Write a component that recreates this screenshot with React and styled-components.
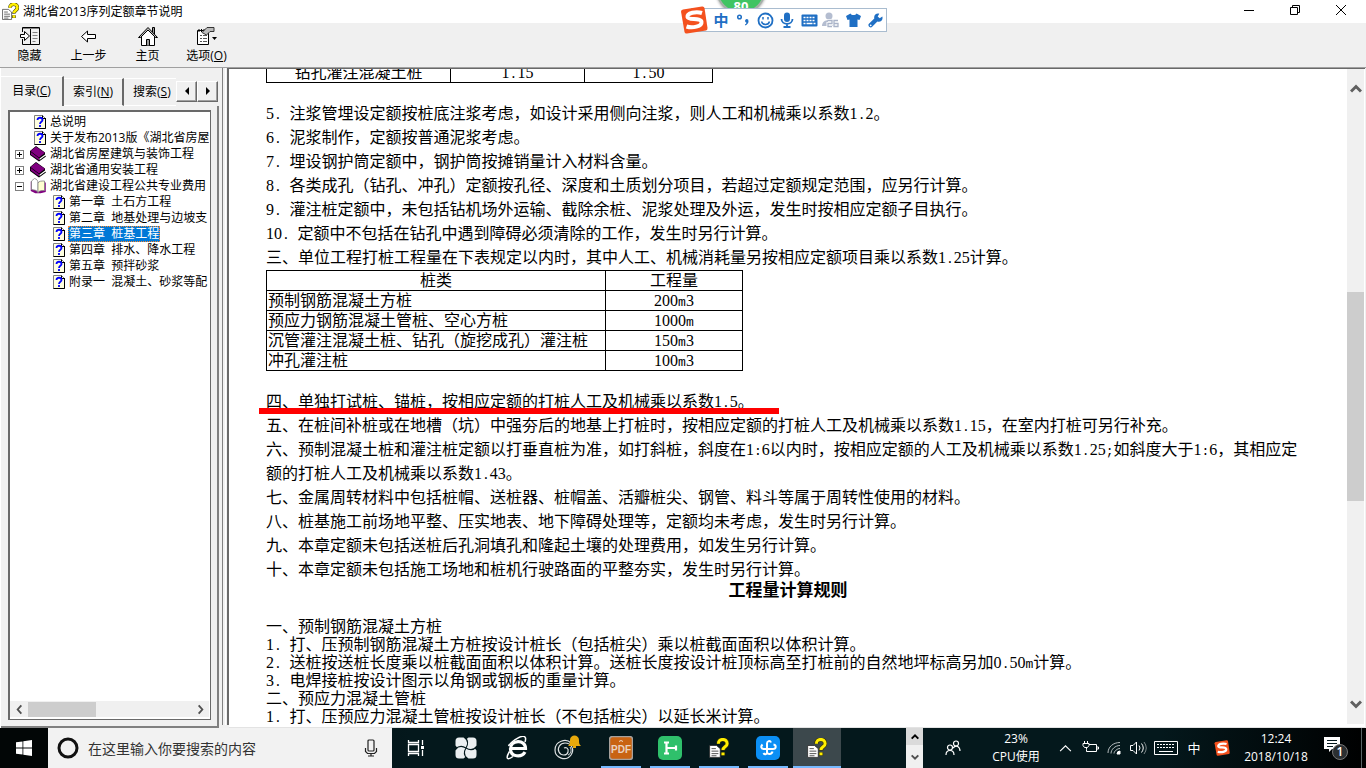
import React from 'react';
import styled, { createGlobalStyle } from 'styled-components';

const UI_FONT = '"Open Sans", "Noto Sans CJK SC", sans-serif';
const DOC_FONT = '"Liberation Serif", "Noto Sans CJK SC", serif';

const GlobalStyle = createGlobalStyle`
    * {
        box-sizing: border-box;
    }

    body {
        margin: 0;
        font-family: ${UI_FONT};
        font-size: 12px;
        color: #000;
        overflow: hidden;
        text-spacing-trim: space-all;
    }

    button {
        font: inherit;
        color: inherit;
        border: 0;
        padding: 0;
        background: none;
    }
`;

/* ---------- data ---------- */

const tree = [
    { type: 'page', label: '总说明' },
    { type: 'page', label: '关于发布2013版《湖北省房屋' },
    { type: 'book', label: '湖北省房屋建筑与装饰工程', toggle: '+' },
    { type: 'book', label: '湖北省通用安装工程', toggle: '+' },
    { type: 'open', label: '湖北省建设工程公共专业费用', toggle: '-' },
    { type: 'page', label: '第一章  土石方工程', child: true },
    { type: 'page', label: '第二章  地基处理与边坡支', child: true },
    { type: 'page', label: '第三章  桩基工程', child: true, selected: true },
    { type: 'page', label: '第四章  排水、降水工程', child: true },
    { type: 'page', label: '第五章  预拌砂浆', child: true },
    { type: 'page', label: '附录一  混凝土、砂浆等配', child: true },
];

const notes = [
    '5. 注浆管埋设定额按桩底注浆考虑，如设计采用侧向注浆，则人工和机械乘以系数1.2。',
    '6. 泥浆制作，定额按普通泥浆考虑。',
    '7. 埋设钢护筒定额中，钢护筒按摊销量计入材料含量。',
    '8. 各类成孔（钻孔、冲孔）定额按孔径、深度和土质划分项目，若超过定额规定范围，应另行计算。',
    '9. 灌注桩定额中，未包括钻机场外运输、截除余桩、泥浆处理及外运，发生时按相应定额子目执行。',
    '10. 定额中不包括在钻孔中遇到障碍必须清除的工作，发生时另行计算。',
    '三、单位工程打桩工程量在下表规定以内时，其中人工、机械消耗量另按相应定额项目乘以系数1.25计算。',
];

const quantities = [
    ['预制钢筋混凝土方桩', '200m3'],
    ['预应力钢筋混凝土管桩、空心方桩', '1000m'],
    ['沉管灌注混凝土桩、钻孔（旋挖成孔）灌注桩', '150m3'],
    ['冲孔灌注桩', '100m3'],
];

const clauses = [
    '五、在桩间补桩或在地槽（坑）中强夯后的地基上打桩时，按相应定额的打桩人工及机械乘以系数1.15，在室内打桩可另行补充。',
    '六、预制混凝土桩和灌注桩定额以打垂直桩为准，如打斜桩，斜度在1:6以内时，按相应定额的人工及机械乘以系数1.25;如斜度大于1:6，其相应定额的打桩人工及机械乘以系数1.43。',
    '七、金属周转材料中包括桩帽、送桩器、桩帽盖、活瓣桩尖、钢管、料斗等属于周转性使用的材料。',
    '八、桩基施工前场地平整、压实地表、地下障碍处理等，定额均未考虑，发生时另行计算。',
    '九、本章定额未包括送桩后孔洞填孔和隆起土壤的处理费用，如发生另行计算。',
    '十、本章定额未包括施工场地和桩机行驶路面的平整夯实，发生时另行计算。',
];

const rules = [
    '一、预制钢筋混凝土方桩',
    '1. 打、压预制钢筋混凝土方桩按设计桩长（包括桩尖）乘以桩截面面积以体积计算。',
    '2. 送桩按送桩长度乘以桩截面面积以体积计算。送桩长度按设计桩顶标高至打桩前的自然地坪标高另加0.50m计算。',
    '3. 电焊接桩按设计图示以角钢或钢板的重量计算。',
    '二、预应力混凝土管桩',
    '1. 打、压预应力混凝土管桩按设计桩长（不包括桩尖）以延长米计算。',
];

/* ---------- icons ---------- */

const HelpIcon = ({ size = 16 }) => (
    <svg width={size} height={size} viewBox="0 0 16 16">
        <path d="M0.500 6h5.500l3 2.500V15.500H0.500z" fill="#fff" stroke="#222" strokeWidth="0.600" />
        <path d="M2 8.500h3.500M2 10.500h5.500M2 12.500h5.500M2 14.200h4" stroke="#555" strokeWidth="0.800" />
        <path d="M7.500 4.500c0-4.500 7-4.500 7 0 0 2.500-3.300 2.500-3.300 5.500M11.200 11.500v2.500" fill="none" stroke="#3a3600" strokeWidth="3.400" />
        <path d="M7.500 4.500c0-4.500 7-4.500 7 0 0 2.500-3.300 2.500-3.300 5M11.200 11.500v2.300" fill="none" stroke="#ffee00" strokeWidth="2.400" />
    </svg>
);

const PageIcon = () => (
    <svg width="12" height="14" viewBox="0 0 12 14">
        <path d="M0.500 0.500h8l3 3v10h-11z" fill="#ffffe0" stroke="#808080" />
        <path d="M11.500 3v10.500H0.500M8.500 0.500v3h3" fill="none" stroke="#000" />
        <path d="M3.500 5c0-3 5-3 5 0 0 1.800-2.500 1.800-2.500 4M6 10v2" fill="none" stroke="#0000ff" strokeWidth="1.800" />
    </svg>
);

const BookIcon = () => (
    <svg width="16" height="16" viewBox="0 0 16 16">
        <path d="M0 5v4l9 6.500 7-5-1-1V6.500L6 0z" fill="#000" />
        <path d="M0.500 5L6 0.800l9 6-6 4.700z" fill="#800080" />
        <path d="M0.800 6l8.200 6.200v2L0.800 8.500z" fill="#800080" />
        <path d="M9.500 12.500l5.500-4v1.500l-5.500 4z" fill="#fff" />
    </svg>
);

const OpenBookIcon = () => (
    <svg width="16" height="16" viewBox="0 0 16 16">
        <path d="M1.500 3.500v9l4 2h5l4.500-1v-9" fill="#800080" stroke="#800080" strokeWidth="1.500" />
        <path d="M1.500 3l3-2.500C7 1 8 3 8 5v9.500c-1-2-3-2.500-4-2.500l-2.500-.5z" fill="#fff" stroke="#808080" strokeWidth="0.800" />
        <path d="M8 5c1-2 3-2 6.500-2v9.500c-3 0-5 0-6.500 2z" fill="#ffffd0" stroke="#808080" strokeWidth="0.800" />
    </svg>
);

const HideIcon = () => (
    <svg width="20" height="20" viewBox="0 0 20 20" fill="none" stroke="#000">
        <path d="M2.500 6V1.500h17v17h-17V13M10.500 1.500v17" />
        <path d="M3 2.500h16" stroke="#808080" />
        <path d="M12.500 6.500h5M12.500 9.500h5M12.500 12.500h5M12.500 15.500h3" stroke="#808080" />
        <path d="M0.500 8.500h4v-3l5 4.500-5 4.500v-3h-4z" fill="#fff" />
    </svg>
);

const BackIcon = () => (
    <svg width="20" height="20" viewBox="0 0 20 20">
        <path d="M2.500 10.500l6-5.500v3.500h8v4h-8V16z" fill="#fff" stroke="#000" />
    </svg>
);

const HomeIcon = () => (
    <svg width="20" height="20" viewBox="0 0 20 20" stroke="#000">
        <path d="M14.500 6V1.500h2V8" fill="#999" />
        <path d="M3.500 10v9.500h13V10L10 3z" fill="#fff" />
        <path d="M0.500 11.500L10 1.500l9.500 10h-2L10 4l-7.500 7.500z" fill="#bbb" />
        <path d="M8.500 19.500v-6h3v6" fill="#999" />
    </svg>
);

const OptionsIcon = () => (
    <svg width="22" height="20" viewBox="0 0 22 20">
        <path d="M1.500 4.500h11v14h-11z" fill="#fff" stroke="#000" />
        <path d="M3 3v3M5.500 3v3M8 3v3" stroke="#000" />
        <path d="M4 9.500h2M7 9.500h4M4 12.500h2M7 12.500h4M4 15.500h2M7 15.500h4" stroke="#555" />
        <path d="M6 6.500L11 1.500h7v4h-4L10.500 9z" fill="#bbb" stroke="#333" />
        <path d="M16 11h5l-2.500 3z" fill="#000" />
    </svg>
);

const SogouIcon = ({ size = 28 }) => (
    <svg width={size} height={size} viewBox="0 0 28 28">
        <path d="M1 5.500Q1 4 3 3.500L22 .500q2-.3 2.500 1.500l3 20q.2 2-1.500 2.500L7 27.500q-2 .3-2.500-1.500z" fill="#f4511e" />
        <path d="M22 7c-6-2-15 0-14.500 4 .5 3.500 13.500.5 14 5s-9 6.500-15 4.500" fill="none" stroke="#fff" strokeWidth="4" />
    </svg>
);

const Chevron = ({ d, size = 12, color = '#505050', width = 2 }) => (
    <svg width={size} height={size} viewBox="0 0 12 12">
        <path d={d} fill="none" stroke={color} strokeWidth={width} />
    </svg>
);

const UP = 'M1 8.500L6 3.500l5 5';
const DOWN = 'M1 3.500l5 5 5-5';
const LEFT = 'M8 1.500L4 6l4 4.500';
const RIGHT = 'M4 1.500L8 6l-4 4.500';

/* ---------- window chrome ---------- */

const Desktop = styled.div`
    height: 100vh;
    display: flex;
    flex-direction: column;
    background: #f0f0f0;
    position: relative;
    overflow: hidden;
`;

const TitleBar = styled.header`
    display: flex;
    align-items: center;
    height: 23px;
    flex: none;
    padding: 0 2px;
    gap: 4px;
    background: #fff;

    h1 {
        flex: 1;
        margin: 0;
        font-size: 12px;
        font-weight: 400;
        line-height: 20px;
    }
`;

const WindowButtons = styled.div`
    display: flex;
    align-self: flex-start;
`;

const WindowButton = styled.button`
    display: grid;
    place-items: center;
    width: 46px;
    height: 20px;
`;

const Toolbar = styled.nav`
    display: flex;
    height: 44px;
    flex: none;
    padding-top: 3px;
`;

const ToolButton = styled.button`
    display: flex;
    flex-direction: column;
    align-items: center;
    width: 59px;
    line-height: 20px;
    white-space: nowrap;

    svg {
        flex: none;
    }
`;

const Body = styled.div`
    flex: 1;
    min-height: 0;
    display: flex;
    border-top: 1px solid #a0a0a0;
`;

/* ---------- sidebar ---------- */

const Sidebar = styled.aside`
    display: flex;
    flex-direction: column;
    width: 219px;
    flex: none;
    padding-top: 8px;
    border-left: 1px solid #fff;
`;

const Tabs = styled.div`
    display: flex;
    align-items: flex-end;
    height: 30px;
    flex: none;
`;

const Tab = styled.button`
    width: ${props => props.$width}px;
    height: ${props => (props.$active ? 30 : 28)}px;
    padding: 0 0 ${props => (props.$active ? 4 : 2)}px ${props => (props.$clipped ? 9 : 0)}px;
    flex: none;
    overflow: hidden;
    white-space: nowrap;
    text-align: ${props => (props.$clipped ? 'left' : 'center')};
    border-top: 1px solid #fff;
    border-right: ${props => (props.$clipped ? '0' : '2px solid #696969')};
    border-bottom: ${props => (props.$active ? '0' : '1px solid #fff')};
`;

const TabScroll = styled.button`
    display: grid;
    place-items: center;
    width: 21px;
    height: 21px;
    flex: none;
    align-self: center;
    border: 1px solid;
    border-color: #fff #696969 #696969 #fff;
    box-shadow: inset -1px -1px #a0a0a0;
`;

const TabPanel = styled.div`
    flex: 1;
    min-height: 0;
    display: flex;
    padding: 4px 6px 6px 7px;
    border-right: 2px solid #808080;
    border-bottom: 2px solid #808080;
`;

const TreeBox = styled.div`
    flex: 1;
    min-width: 0;
    display: flex;
    flex-direction: column;
    background: #fff;
    border: 1px solid #696969;
    border-width: 2px 1px 1px 2px;
    padding: 0 1px 2px 0;
`;

const TreeList = styled.ul`
    flex: 1;
    min-height: 0;
    margin: 0;
    padding: 2px 0 0;
    list-style: none;
    overflow: hidden;
`;

const TreeItem = styled.li`
    display: flex;
    align-items: center;
    height: 16px;
    padding-left: ${props => (props.$child ? 43 : 5)}px;
    gap: ${props => (props.$child ? 3 : 0)}px;
    white-space: pre;
`;

const Toggle = styled.button`
    display: grid;
    place-items: center;
    width: 9px;
    height: 9px;
    margin-right: 6px;
    flex: none;
    border: 1px solid #808080;
    background: #fff;
    visibility: ${props => (props.$hidden ? 'hidden' : 'visible')};
`;

const ItemIcon = styled.span`
    display: flex;
    justify-content: flex-end;
    width: ${props => (props.$child ? 12 : 16)}px;
    margin-right: ${props => (props.$child ? 0 : 3)}px;
    flex: none;
`;

const ItemLabel = styled.a`
    padding: 0 1px;
    height: 16px;
    line-height: 15px;
    color: ${props => (props.$selected ? '#fff' : '#000')};
    background: ${props => (props.$selected ? '#0078d7' : 'transparent')};
    outline: ${props => (props.$selected ? '1px dotted #ff8728' : 'none')};
    outline-offset: -1px;
    text-decoration: none;
`;

const HScroll = styled.div`
    display: flex;
    align-items: center;
    height: 16px;
    flex: none;
    background: #f0f0f0;

    button {
        display: grid;
        place-items: center;
        width: 18px;
        height: 16px;
    }
`;

const HTrack = styled.div`
    flex: 1;
    height: 15px;
`;

const HThumb = styled.div`
    width: 42%;
    height: 100%;
    background: #cdcdcd;
`;

/* ---------- document ---------- */

const Splitter = styled.div`
    width: 10px;
    flex: none;
    margin-bottom: 3px;
    border-right: 2px solid #696969;
    display: flex;

    &::before {
        content: '';
        width: 2px;
        margin-left: 3px;
        border-left: 1px solid #808080;
        border-right: 1px solid #fff;
    }
`;

const DocPane = styled.main`
    flex: 1;
    min-width: 0;
    display: flex;
    margin-right: 1px;
    background: #fff;
    border-top: 1px solid #696969;
    border-bottom: 1px solid #e3e3e3;
`;

const Page = styled.article`
    flex: 1;
    min-width: 0;
    overflow: hidden;
    padding: 0 37px;
    font-family: ${DOC_FONT};
    font-size: 16px;
    line-height: 24px;

    p {
        margin: 0;
    }
`;

// half-width cell for punctuation between full-width characters
const HalfWidth = styled.span`
    font-family: "Liberation Mono", monospace;
    font-size: 13px;
    line-height: 1;
    white-space: pre-wrap;
`;

const DocTable = styled.table`
    width: ${props => props.$width}px;
    table-layout: fixed;
    border-collapse: collapse;
    margin: ${props => (props.$scrolled ? '-7px 0 19px' : '0 0 19px')};
    line-height: 18px;

    th,
    td {
        height: 20px;
        padding: 0 1px;
        border: 1px solid #000;
        font-weight: 400;
        text-align: center;
        white-space: nowrap;
    }

    tbody th {
        text-align: ${props => (props.$scrolled ? 'center' : 'left')};
    }
`;

const Marked = styled.p`
    position: relative;

    &::after {
        content: '';
        position: absolute;
        left: -7px;
        bottom: 0;
        width: 520px;
        height: 6px;
        background: #f00;
    }
`;

const SectionTitle = styled.h2`
    margin: 0 0 18px;
    font-size: 17px;
    font-weight: 700;
    line-height: 18px;
    text-align: center;
`;

const Rules = styled.section`
    line-height: 18px;
`;

const VScroll = styled.div`
    display: flex;
    flex-direction: column;
    width: 17px;
    flex: none;
    margin: 0 1px 3px 0;
    background: #f0f0f0;

    button {
        display: grid;
        place-items: center;
        height: 40px;
    }
`;

const VTrack = styled.div`
    flex: 1;
    padding-top: 183px;
`;

const VThumb = styled.div`
    height: 209px;
    background: #cdcdcd;
`;

/* ---------- input method bar ---------- */

const Badge = styled.div`
    position: absolute;
    top: -36px;
    left: 716px;
    width: 50px;
    height: 50px;
    border: 2px solid #a4b0a8;
    border-radius: 50%;
    background: #3fc463;
    box-shadow: 0 1px 3px #999;
    color: #fff;
    font-size: 13px;
    font-weight: 700;
    line-height: 80px;
    text-align: center;
`;

const ImeBar = styled.div`
    position: absolute;
    top: 8px;
    left: 691px;
    width: 196px;
    height: 24px;
    display: flex;
    align-items: center;
    background: #fff;
    border: 1px solid #a9bccf;
    color: #1f6fc4;

    > svg {
        flex: none;
        margin: -1px 2px 0 -12px;
    }
`;

const ImeButton = styled.button`
    display: grid;
    place-items: center;
    flex: 1;
    height: 22px;
    font-size: 15px;
    font-weight: 700;
    line-height: 20px;
`;

/* ---------- taskbar ---------- */

const Taskbar = styled.footer`
    display: flex;
    height: 40px;
    flex: none;
    color: #fff;
    background: linear-gradient(90deg, #000 0, #04181c 30%, #04181c 85%, #000 100%);
`;

const StartButton = styled.button`
    display: grid;
    place-items: center;
    width: 48px;
    height: 40px;
    background: #020606;
`;

const SearchBox = styled.label`
    display: flex;
    align-items: center;
    width: 344px;
    padding: 0 13px 0 8px;
    gap: 8px;
    background: #f2f2f2;

    input {
        flex: 1;
        min-width: 0;
        padding: 0;
        border: 0;
        outline: 0;
        background: none;
        font: 14px ${UI_FONT};
    }

    input::placeholder {
        color: #333;
        opacity: 1;
    }
`;

const AppGroup = styled.div`
    display: flex;
    gap: ${props => props.$gap}px;
    margin-right: 7px;
`;

const AppButton = styled.button`
    display: grid;
    place-items: center;
    width: 48px;
    height: 40px;
    border: 0 solid transparent;
    border-width: 0 ${props => (props.$running ? 4 : 0)}px;
    background: ${props => (props.$active ? '#3c484c' : 'none')};
    box-shadow: ${props => (props.$active ? 'inset 0 -2px #76b9ff' : 'none')};
    ${props => props.$running && 'background: linear-gradient(#76b9ff, #76b9ff) bottom / 100% 2px no-repeat padding-box;'}
`;

const TrayScroll = styled.div`
    display: grid;
    grid-template-rows: 17px 23px;
    width: 17px;
    background: #f0f0f0;
    margin-left: auto;

    button {
        display: grid;
        place-items: center;
    }

    button:first-child {
        background: #dadada;
    }
`;

const Tray = styled.div`
    display: flex;
    align-items: center;
    width: 443px;
    flex: none;
`;

const TrayItem = styled.button`
    display: grid;
    place-items: center;
    width: ${props => props.$width}px;
    flex: none;
    height: 40px;
    line-height: 18px;
    font-size: ${props => props.$size || 12}px;
    white-space: pre;
`;

const ShowDesktop = styled.button`
    width: 5px;
    height: 40px;
    margin-left: auto;
    border-left: 1px solid #596466;
`;

/* ---------- helpers ---------- */

const renderText = text =>
    text.split(/([.:;m ]+)/).map((part, i) => (i % 2 ? <HalfWidth key={i}>{part}</HalfWidth> : part));

const treeIcons = { page: PageIcon, book: BookIcon, open: OpenBookIcon };

function TreeRow({ item }) {
    const Icon = treeIcons[item.type];
    return (
        <TreeItem $child={item.child}>
            {!item.child && (
                <Toggle $hidden={!item.toggle} aria-label="展开">
                    <svg width="7" height="7" viewBox="0 0 7 7" stroke="#000">
                        <path d={item.toggle === '+' ? 'M1 3.500h5M3.500 1v5' : 'M1 3.500h5'} />
                    </svg>
                </Toggle>
            )}
            <ItemIcon $child={item.child}><Icon /></ItemIcon>
            <ItemLabel href="#" $selected={item.selected}>{item.label}</ItemLabel>
        </TreeItem>
    );
}

function Contents() {
    return (
        <Sidebar>
            <Tabs role="tablist">
                <Tab role="tab" $active $width={63}>目录(<u>C</u>)</Tab>
                <Tab role="tab" $width={60}>索引(<u>N</u>)</Tab>
                <Tab role="tab" $width={52} $clipped>搜索(<u>S</u>)</Tab>
                <TabScroll aria-label="向左">
                    <svg width="8" height="10" viewBox="0 0 8 10"><path d="M6 1v8L2 5z" /></svg>
                </TabScroll>
                <TabScroll aria-label="向右">
                    <svg width="8" height="10" viewBox="0 0 8 10"><path d="M2 1v8l4-4z" /></svg>
                </TabScroll>
            </Tabs>
            <TabPanel>
                <TreeBox>
                    <TreeList>
                        {tree.map(item => <TreeRow key={item.label} item={item} />)}
                    </TreeList>
                    <HScroll>
                        <button aria-label="向左滚动"><Chevron d={LEFT} size={11} /></button>
                        <HTrack><HThumb /></HTrack>
                        <button aria-label="向右滚动"><Chevron d={RIGHT} size={11} /></button>
                    </HScroll>
                </TreeBox>
            </TabPanel>
        </Sidebar>
    );
}

function Document() {
    return (
        <DocPane>
            <Page>
                <DocTable $width={447} $scrolled>
                    <colgroup>
                        <col width="184" />
                        <col width="134" />
                        <col />
                    </colgroup>
                    <tbody>
                        <tr>
                            <th scope="row">钻孔灌注混凝土桩</th>
                            <td>{renderText('1.15')}</td>
                            <td>{renderText('1.50')}</td>
                        </tr>
                    </tbody>
                </DocTable>
                {notes.map(text => <p key={text}>{renderText(text)}</p>)}
                <DocTable $width={477}>
                    <colgroup>
                        <col width="339" />
                        <col />
                    </colgroup>
                    <thead>
                        <tr>
                            <th scope="col">桩类</th>
                            <th scope="col">工程量</th>
                        </tr>
                    </thead>
                    <tbody>
                        {quantities.map(([name, amount]) => (
                            <tr key={name}>
                                <th scope="row">{name}</th>
                                <td>{renderText(amount)}</td>
                            </tr>
                        ))}
                    </tbody>
                </DocTable>
                <Marked>{renderText('四、单独打试桩、锚桩，按相应定额的打桩人工及机械乘以系数1.5。')}</Marked>
                {clauses.map(text => <p key={text}>{renderText(text)}</p>)}
                <SectionTitle>工程量计算规则</SectionTitle>
                <Rules>
                    {rules.map(text => <p key={text}>{renderText(text)}</p>)}
                </Rules>
            </Page>
            <VScroll>
                <button aria-label="向上滚动"><Chevron d={UP} color="#606060" width={3} /></button>
                <VTrack><VThumb /></VTrack>
                <button aria-label="向下滚动"><Chevron d={DOWN} color="#606060" width={3} /></button>
            </VScroll>
        </DocPane>
    );
}

function InputMethod() {
    return (
        <>
            <Badge>80</Badge>
            <ImeBar>
                <SogouIcon />
                <ImeButton>中</ImeButton>
                <ImeButton aria-label="标点">
                    <svg width="14" height="14" viewBox="0 0 14 14">
                        <circle cx="3.500" cy="4" r="1.800" fill="none" stroke="#1f6fc4" strokeWidth="1.500" />
                        <path d="M10.500 6a2 2 0 0 1 2 2.200c0 2-1.500 3.500-3 4.300l-.6-1c1-.6 1.500-1.200 1.600-1.800A1.900 1.900 0 0 1 10.500 6z" fill="#1f6fc4" />
                    </svg>
                </ImeButton>
                <ImeButton aria-label="表情">
                    <svg width="17" height="17" viewBox="0 0 17 17" fill="none" stroke="#1f6fc4" strokeWidth="1.800">
                        <circle cx="8.500" cy="8.500" r="7" />
                        <path d="M6 5v2.500M11 5v2.500M4.500 9.500c1 4 7 4 8 0" strokeWidth="1.500" />
                    </svg>
                </ImeButton>
                <ImeButton aria-label="语音">
                    <svg width="14" height="16" viewBox="0 0 14 16">
                        <rect x="4" y="0.500" width="6" height="9.500" rx="3" fill="#1f6fc4" />
                        <path d="M1.500 7c0 6.500 11 6.500 11 0M7 12v3M3.500 15h7" fill="none" stroke="#1f6fc4" strokeWidth="1.800" />
                    </svg>
                </ImeButton>
                <ImeButton aria-label="软键盘">
                    <svg width="17" height="13" viewBox="0 0 17 13">
                        <rect x="0.500" y="0.500" width="16" height="12" rx="1" fill="#1f6fc4" />
                        <path d="M2.500 3.500h12M2.500 6.500h12" stroke="#fff" strokeWidth="1.500" strokeDasharray="2 1" />
                        <path d="M2.500 9.500h2M5.500 9.500h6M12.500 9.500h2" stroke="#fff" strokeWidth="1.500" />
                    </svg>
                </ImeButton>
                <ImeButton aria-label="账号">
                    <svg width="18" height="16" viewBox="0 0 18 16">
                        <circle cx="7" cy="4" r="3.500" fill="#b4bdd0" />
                        <path d="M0 14c0-4 3-6 7-6s6 2 6 6z" fill="#b4bdd0" />
                        <path d="M6 8.500h4v3H6v3h4M16 8.500h-4v6h4v-3h-4" fill="none" stroke="#fff" strokeWidth="3" />
                        <path d="M6 8.500h4v3H6v3h4M16 8.500h-4v6h4v-3h-4" fill="none" stroke="#a9b3c8" strokeWidth="1.300" />
                    </svg>
                </ImeButton>
                <ImeButton aria-label="皮肤">
                    <svg width="15" height="14" viewBox="0 0 15 14">
                        <path d="M4.500 0.500c1 2 5 2 6 0L15 3l-1.500 4-2-.5V14h-8V6.500l-2 .5L0 3z" fill="#1f6fc4" />
                    </svg>
                </ImeButton>
                <ImeButton aria-label="工具">
                    <svg width="15" height="15" viewBox="0 0 15 15">
                        <path d="M14.300 3.500l-2.600 1.800-2-1.900L11.300.7C8.500-.3 5.500 2 6.300 5.500L.7 11c-1.200 1.700 1.500 4.300 3.200 3.100l5.500-5.500c3.500.9 6-2 4.900-5.100z" fill="#1f6fc4" />
                        <circle cx="2.700" cy="12.300" r="0.900" fill="#fff" />
                    </svg>
                </ImeButton>
            </ImeBar>
        </>
    );
}

function SystemTaskbar() {
    return (
        <Taskbar>
            <StartButton aria-label="开始">
                <svg width="16" height="16" viewBox="0 0 16 16" fill="#fff">
                    <path d="M0 2.300L6.500 1.400v6.200H0zM7.300 1.300L16 0v7.600H7.300zM0 8.400h6.500v6.200L0 13.700zM7.300 8.400H16V16l-8.700-1.300z" />
                </svg>
            </StartButton>
            <SearchBox>
                <svg width="24" height="24" viewBox="0 0 24 24">
                    <circle cx="12" cy="12" r="9" fill="none" stroke="#111" strokeWidth="3" />
                </svg>
                <input aria-label="搜索" placeholder="在这里输入你要搜索的内容" />
                <svg width="16" height="20" viewBox="0 0 16 20" fill="none" stroke="#222" strokeWidth="1.200">
                    <rect x="5" y="2" width="6" height="11" rx="1" />
                    <path d="M2.500 10v3.500l2 2h7l2-2V10M8 15.500V18M5 18h6" />
                </svg>
            </SearchBox>
            <AppGroup $gap={2}>
                <AppButton aria-label="任务视图">
                    <svg width="18" height="18" viewBox="0 0 18 18" fill="none" stroke="#fff" strokeWidth="1.300">
                        <path d="M1.500 1v2.500h10V1M1.500 17v-2.500h10V17M1.500 5.500h10v7h-10zM15.500 1v5M15.500 11v6" />
                        <path d="M14 7h3v3h-3z" fill="#fff" stroke="none" />
                    </svg>
                </AppButton>
                <AppButton aria-label="风车">
                    <svg width="22" height="22" viewBox="0 0 22 22">
                        <path d="M4 0.500h4.500L11 2.500 13.500.5H18q3.500 0 3.500 3.500v4.500L19.500 11l2 2.500V18q0 3.500-3.500 3.500h-4.500L11 19.500l-2.500 2H4Q.5 21.500.5 18v-4.500L2.500 11l-2-2.500V4Q.5.5 4 .5z" fill="#eceff1" />
                        <path d="M11 11C13.500 7 12.500 3 10 .500M11 11c4 2.500 8 1.500 10.500-1M11 11c-2.500 4-1.500 8 1 10.500M11 11C7 8.500 3 9.500.500 12" fill="none" stroke="#04181c" strokeWidth="1.100" />
                    </svg>
                </AppButton>
                <AppButton aria-label="浏览器">
                    <svg width="24" height="24" viewBox="0 0 24 24" fill="none" stroke="#fff">
                        <path d="M7 12.500h14.500c0-9.500-15-9-15 .5 0 8.500 11.500 8.500 14.500 3" strokeWidth="3.200" />
                        <path d="M5.500 15.500C1 23 3.500 24.500 9 20.500M4.500 10C8 4.500 20-3 21.500 2c.3 1.300 0 2.500-.5 4" strokeWidth="1.500" />
                    </svg>
                </AppButton>
                <AppButton aria-label="消息">
                    <svg width="30" height="28" viewBox="0 0 30 28" fill="none">
                        <path d="M20 9c-5-5-16-2-16 7 0 8 11 12 16 5 4-6 0-12-6-12-5 0-8 5-6 9s8 4 9 0-2-5-4-4" stroke="#dfe3e4" strokeWidth="1.200" />
                        <path d="M17 21c3-1 4-5 2-8" stroke="#dfe3e4" />
                        <path d="M17 12c2-2 2-3 2-6 0-6 9-6 9 0 0 3 0 4 2 6zM22 12h3v2h-3z" fill="#e8a90c" />
                    </svg>
                </AppButton>
            </AppGroup>
            <AppGroup $gap={1}>
                <AppButton $running aria-label="PDF">
                    <svg width="24" height="24" viewBox="0 0 24 24">
                        <rect x="0.500" y="0.500" width="23" height="23" rx="3" fill="#c96312" stroke="#a7a19c" strokeWidth="1.500" />
                        <path d="M10 5.500q2-2 4 0" fill="none" stroke="#f0d9c8" />
                        <text x="12" y="17" textAnchor="middle" fontFamily="Liberation Sans" fontWeight="700" fontSize="10" fill="#e9d2c0">PDF</text>
                    </svg>
                </AppButton>
                <AppButton $running aria-label="广联达">
                    <svg width="24" height="24" viewBox="0 0 24 24">
                        <rect width="24" height="24" rx="5" fill="#2fc06b" />
                        <path d="M6 6.500h5M8.500 6.500v11M6 17.500h5M8.500 12H18M18 9.500v5" fill="none" stroke="#fff" strokeWidth="2.200" />
                    </svg>
                </AppButton>
                <AppButton $running aria-label="帮助"><HelpIcon size={20} /></AppButton>
                <AppButton $running aria-label="云">
                    <svg width="24" height="24" viewBox="0 0 24 24">
                        <rect width="24" height="24" rx="5" fill="#0b8ff5" />
                        <path d="M15 6.500c-1-2.500-4-1.500-4 1v9c0 2-2.500 2.500-3.500.5M6.500 8.500c-2 2-1.500 4.500 1.500 4.500h9c3.500 0 3.500-4 .5-4.500M11 15.500c0 3.500 5 3 5.500 0" fill="none" stroke="#fff" strokeWidth="2" />
                    </svg>
                </AppButton>
                <AppButton $active aria-label="帮助"><HelpIcon size={20} /></AppButton>
            </AppGroup>
            <TrayScroll>
                <button aria-label="上"><Chevron d={UP} size={8} color="#000" width={3} /></button>
                <button aria-label="下"><Chevron d={DOWN} size={8} width={3} /></button>
            </TrayScroll>
            <Tray>
                <TrayItem $width={60} aria-label="人脉">
                    <svg width="16" height="16" viewBox="0 0 16 16" fill="none" stroke="#fff" strokeWidth="1.200">
                        <circle cx="11" cy="3.500" r="2.500" />
                        <circle cx="5" cy="7.500" r="2.500" />
                        <path d="M1 15c0-6 8-6 8 0M8 8c3-3.500 7-1.500 7 3" />
                    </svg>
                </TrayItem>
                <TrayItem $width={66}>{'23%\nCPU使用'}</TrayItem>
                <TrayItem $width={32} aria-label="显示隐藏的图标"><Chevron d={UP} size={13} color="#fff" width={1} /></TrayItem>
                <TrayItem $width={18} aria-label="电池">
                    <svg width="17" height="14" viewBox="0 0 17 14" fill="none" stroke="#fff">
                        <path d="M7 3.500h7.500v7H4.500v-2M15 6h1.500v2H15M2.500 0v2M5.500 0v2M1 2.500h6v2L5.500 6.500H2.500L1 4.500zM4.500 6.500v2" />
                    </svg>
                </TrayItem>
                <TrayItem $width={30} aria-label="网络">
                    <svg width="14" height="14" viewBox="0 0 14 14" fill="none" stroke="#b5bcbe">
                        <path d="M1 12C1 6 6 1.500 13 1.500M4 12.500c0-4 4-8 9-8M7 12.500c0-2 3-5 6-5" />
                        <path d="M10 13a3 3 0 0 1 3-3v3z" fill="#fff" stroke="#fff" />
                    </svg>
                </TrayItem>
                <TrayItem $width={18} aria-label="音量">
                    <svg width="17" height="14" viewBox="0 0 17 14" fill="none" stroke="#fff">
                        <path d="M0.500 4.500h2.500L6.500 1v12L3 9.500H0.500zM9 4.500q2 2.500 0 5M11.500 2.500q3.500 4.500 0 9" />
                        <path d="M14 1q4.500 6 0 12" stroke="#7d8789" />
                    </svg>
                </TrayItem>
                <TrayItem $width={38} aria-label="键盘">
                    <svg width="24" height="14" viewBox="0 0 24 14" fill="none" stroke="#fff">
                        <path d="M0.500 0.500h23v13h-23zM5 10.500h14" />
                        <path d="M3 3.500h18M3 6.500h18" strokeDasharray="2 1" />
                    </svg>
                </TrayItem>
                <TrayItem $width={18} $size={13}>中</TrayItem>
                <TrayItem $width={38}><SogouIcon size={16} /></TrayItem>
                <TrayItem $width={70}>{'12:24\n2018/10/18'}</TrayItem>
                <TrayItem $width={49} aria-label="通知">
                    <svg width="26" height="26" viewBox="0 0 26 26">
                        <path d="M1 2h16v12H9l-3 3v-3H1z" fill="#fff" />
                        <path d="M4 5.500h10M4 8.500h10M4 11.500h6" stroke="#04181c" />
                        <circle cx="17" cy="17" r="7.500" fill="#2b2f31" stroke="#777" />
                        <text x="17" y="21" textAnchor="middle" fontFamily="Open Sans" fontWeight="600" fontSize="12" fill="#fff">1</text>
                    </svg>
                </TrayItem>
                <ShowDesktop aria-label="显示桌面" />
            </Tray>
        </Taskbar>
    );
}

function App() {
    return (
        <>
            <GlobalStyle />
            <Desktop>
                <TitleBar>
                    <HelpIcon size={17} />
                    <h1>湖北省2013序列定额章节说明</h1>
                    <WindowButtons>
                        <WindowButton aria-label="最小化">
                            <svg width="10" height="10" viewBox="0 0 10 10" stroke="#000"><path d="M0 5.500h10" /></svg>
                        </WindowButton>
                        <WindowButton aria-label="还原">
                            <svg width="10" height="10" viewBox="0 0 10 10" fill="none" stroke="#000">
                                <path d="M0.500 2.500h7v7h-7zM2.500 2.500v-2h7v7h-2" />
                            </svg>
                        </WindowButton>
                        <WindowButton aria-label="关闭">
                            <svg width="10" height="10" viewBox="0 0 10 10" stroke="#000"><path d="M0 0l10 10M10 0L0 10" /></svg>
                        </WindowButton>
                    </WindowButtons>
                </TitleBar>
                <Toolbar>
                    <ToolButton><HideIcon />隐藏</ToolButton>
                    <ToolButton><BackIcon />上一步</ToolButton>
                    <ToolButton><HomeIcon />主页</ToolButton>
                    <ToolButton><OptionsIcon /><span>选项(<u>O</u>)</span></ToolButton>
                </Toolbar>
                <Body>
                    <Contents />
                    <Splitter />
                    <Document />
                </Body>
                <SystemTaskbar />
                <InputMethod />
            </Desktop>
        </>
    );
}

export default App;
